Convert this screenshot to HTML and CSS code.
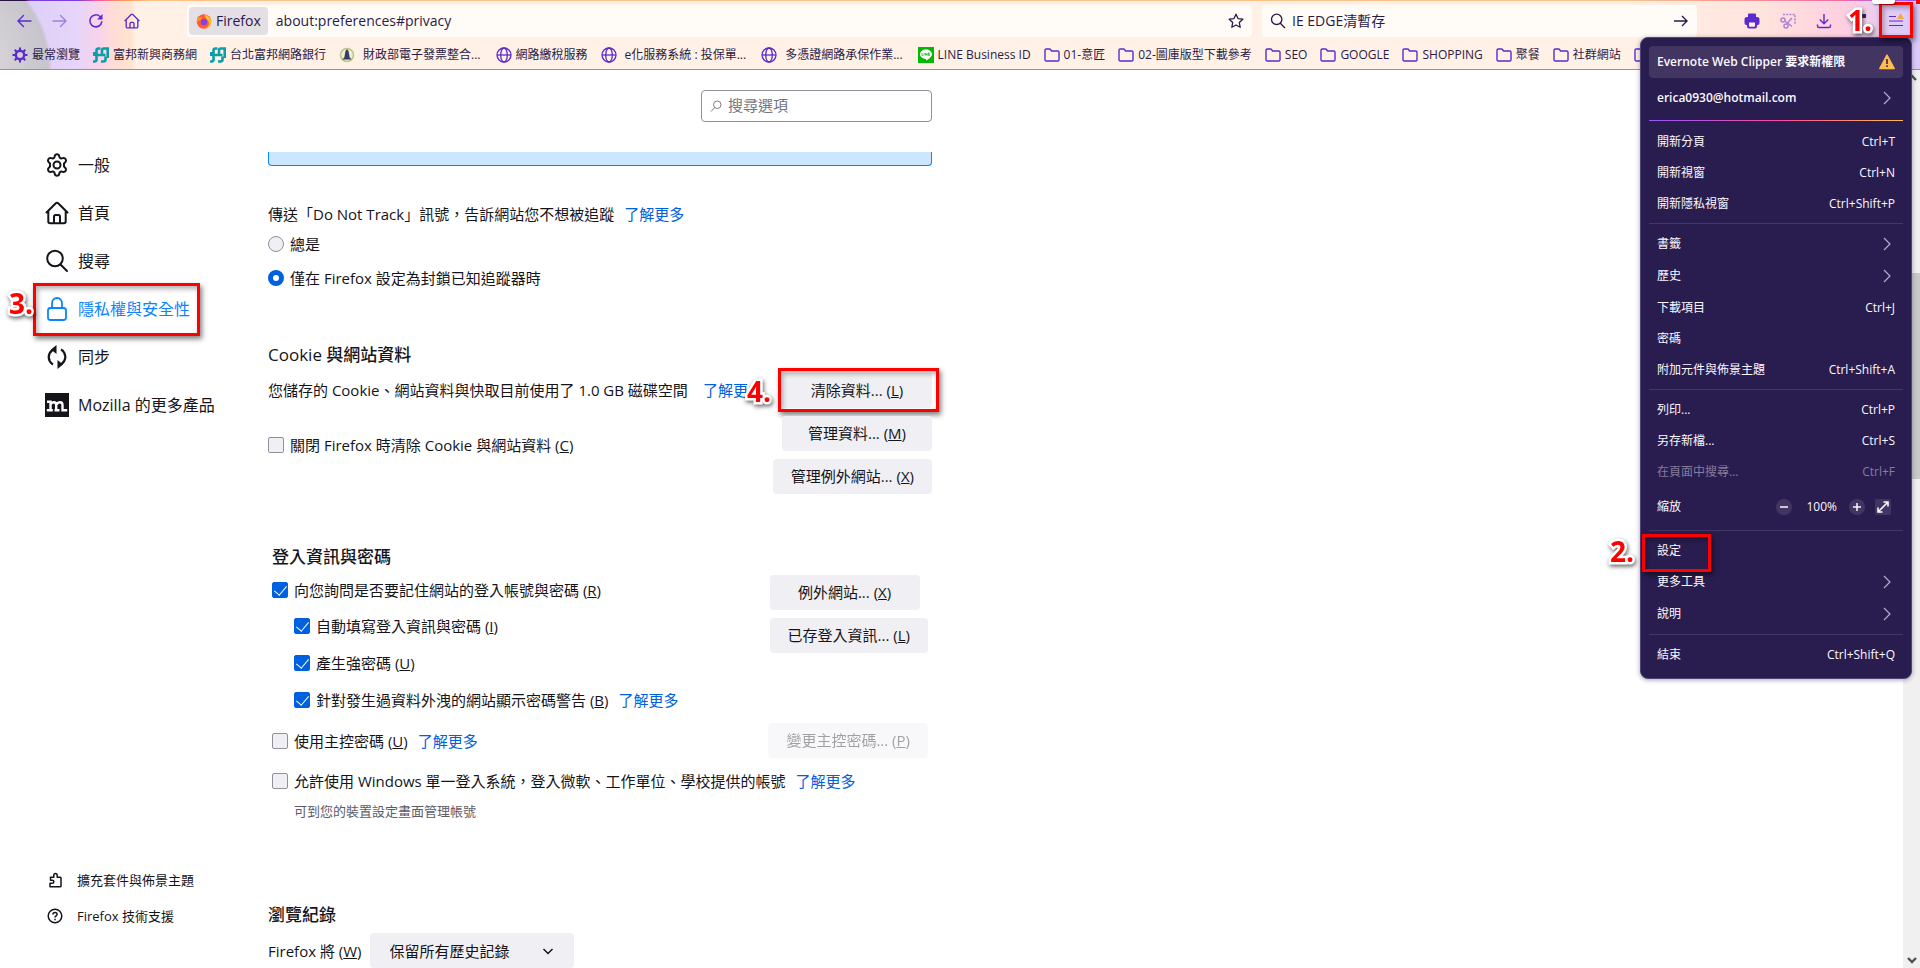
FILE: index.html
```html
<!DOCTYPE html>
<html lang="zh-Hant">
<head>
<meta charset="utf-8">
<title>設定</title>
<link rel="stylesheet" href="styles.css">
</head>
<body>
<svg class="defs" aria-hidden="true">
  <symbol id="folder" viewBox="0 0 16 16"><path d="M1 12.700V3.200C1 2.500 1.500 2 2.200 2h3.300c.4 0 .8.200 1 .500L7.600 4h6.200c.7 0 1.200.5 1.200 1.200v7.500c0 .7-.5 1.300-1.200 1.300H2.200C1.500 14 1 13.400 1 12.700z" fill="none" stroke="currentColor" stroke-width="1.400"/></symbol>
  <symbol id="globe" viewBox="0 0 16 16"><g fill="none" stroke="currentColor" stroke-width="1.300"><circle cx="8" cy="8" r="7"/><ellipse cx="8" cy="8" rx="3.300" ry="7"/><path d="M1 8h14"/></g></symbol>
  <symbol id="fubon" viewBox="0 0 16 16"><path d="M7.500 1.500H5.500Q3.500 1.500 3.500 3.500V12.500Q3.500 14.500 1.500 14.500H0M1.300 5v4M3.500 8H12.500M8 14.500H10.500Q12.500 14.500 12.500 12.500V9.500M9 7V3.500Q9 1.500 11 1.500H14.700V11" fill="none" stroke="#0a9ea8" stroke-width="2.600"/></symbol>
  <symbol id="chev" viewBox="0 0 16 16"><path d="M5 2l6 6-6 6" fill="none" stroke="currentColor" stroke-width="1.200"/></symbol>
  <symbol id="home" viewBox="0 0 24 24"><path d="M1.500 11.500L10.800 2.300a1.700 1.700 0 0 1 2.400 0l9.300 9.200M3.300 10v10.500c0 1 .8 1.800 1.800 1.800h13.800c1 0 1.800-.8 1.800-1.800V10M9 22v-6.300c0-1 .7-1.700 1.700-1.700h2.600c1 0 1.700.7 1.700 1.700V22" fill="none" stroke="currentColor" stroke-width="2" stroke-linecap="round"/></symbol>
  <symbol id="lens" viewBox="0 0 24 24"><path d="M15.500 15.500L22 22" stroke="currentColor" stroke-width="2" stroke-linecap="round"/><circle cx="10" cy="9.500" r="7.800" fill="none" stroke="currentColor" stroke-width="2"/></symbol>
</svg>

<header class="chrome">
  <div class="navbar">
    <div class="nav-buttons">
      <button aria-label="上一頁"><svg viewBox="0 0 16 16"><path d="M15 8H2M7.500 2.500L2 8l5.500 5.500" fill="none" stroke="currentColor" stroke-width="1.400" stroke-linecap="round"/></svg></button>
      <button aria-label="下一頁" class="faded"><svg viewBox="0 0 16 16"><path d="M1 8h13M8.500 2.500L14 8l-5.500 5.500" fill="none" stroke="currentColor" stroke-width="1.400" stroke-linecap="round"/></svg></button>
      <button aria-label="重新載入"><svg viewBox="0 0 16 16"><path d="M13.800 8.700A6 6 0 1 1 12 3.500" fill="none" stroke="currentColor" stroke-width="1.500" stroke-linecap="round"/><path d="M14.500 1v5.500H9z" fill="currentColor"/></svg></button>
      <button aria-label="首頁"><svg><use href="#home"/></svg></button>
    </div>
    <div class="urlbar">
      <span class="identity"><svg viewBox="0 0 16 16"><circle cx="8" cy="8.500" r="7.300" fill="#ff5a36"/><path d="M9 .5c1 1.500 2 2 3.500 3 2 1.500 3 4 2.500 6.500-.8 3.500-4 6-7.500 5.800 4-.8 6.500-4 5-7.300C11.500 6.500 8.500 5 9 .5z" fill="#ffc21f"/><path d="M1 4.500c1-.5 2-.3 2.500.2 1-.7 2-.7 3-.2L5 6.500 1 9z" fill="#ff9a1f"/><circle cx="8" cy="9" r="3.200" fill="#8a3fe0"/></svg>Firefox</span>
      <input class="url" aria-label="網址" value="about:preferences#privacy">
      <button class="plain" aria-label="加入書籤"><svg viewBox="0 0 16 16"><path d="M8 1.200l2 4.400 4.800.6-3.500 3.300.9 4.800L8 12l-4.200 2.300.9-4.800L1.200 6.200 6 5.600z" fill="none" stroke="currentColor" stroke-width="1.300" stroke-linejoin="round"/></svg></button>
    </div>
    <div class="searchbar">
      <svg><use href="#lens"/></svg>
      <input aria-label="搜尋" value="IE EDGE清暫存">
      <button class="plain" aria-label="前往"><svg viewBox="0 0 16 16"><path d="M1 8h13M9 3l5 5-5 5" fill="none" stroke="currentColor" stroke-width="1.400"/></svg></button>
    </div>
    <div class="tools">
      <button aria-label="列印"><svg viewBox="0 0 16 16"><path d="M4 1.500Q4 .5 5 .5h6q1 0 1 1V4H4zM3 4h10a2.500 2.500 0 0 1 2.500 2.500V10q0 2-2 2H13v1.500q0 2-2 2H5q-2 0-2-2V12h-.5q-2 0-2-2V6.500A2.500 2.500 0 0 1 3 4z" fill="currentColor"/><path d="M5 9.500h6V13q0 .8-.8.8H5.800Q5 13.800 5 13z" fill="#ffeede"/></svg></button>
      <button aria-label="擷取畫面" class="faded"><svg viewBox="0 0 16 16"><g fill="none" stroke="currentColor" stroke-width="1.500"><path d="M3 1.500h12v10" stroke-dasharray="2 1.200"/><circle cx="3" cy="7" r="2"/><circle cx="6" cy="13" r="2"/><path d="M4.800 8L12 13.500M6.500 11L12 5"/></g></svg></button>
      <button aria-label="下載"><svg viewBox="0 0 16 16"><path d="M8 1v9.500M3.800 6.500L8 10.700l4.200-4.200M1.500 11.500V13c0 .8.700 1.500 1.500 1.500h10c.8 0 1.500-.7 1.500-1.500v-1.500" fill="none" stroke="currentColor" stroke-width="1.400"/></svg></button>
      <button aria-label="擴充套件"><svg viewBox="0 0 16 16"><path d="M8 1h6v4H8z" fill="#3a2a55"/></svg><b class="step step-1">1.</b></button>
      <button aria-label="選單" class="burger"><svg viewBox="0 0 16 16"><path d="M1 3.500h7M1 8h14M1 12.500h14" stroke="currentColor" stroke-width="1.200"/><path d="M12.500 0l3.500 6H9z" fill="#ffa436"/></svg><i class="mark mark-burger"></i><i class="cut cut-white"></i><i class="cut cut-red"></i></button>
    </div>
  </div>
  <nav class="bookmarks" aria-label="書籤工具列">
    <a href="#"><svg viewBox="0 0 16 16"><circle cx="8" cy="8" r="4.200" fill="none" stroke="currentColor" stroke-width="2.400"/><path d="M8 .5v3M8 12.500v3M.5 8h3M12.500 8h3M2.700 2.700l2 2M11.300 11.300l2 2M2.700 13.300l2-2M11.300 4.700l2-2" stroke="currentColor" stroke-width="2"/></svg>最常瀏覽</a>
    <a href="#"><svg><use href="#fubon"/></svg>富邦新興商務網</a>
    <a href="#"><svg><use href="#fubon"/></svg>台北富邦網路銀行</a>
    <a href="#" class="wide"><svg viewBox="0 0 16 16"><circle cx="8" cy="8" r="6.500" fill="#f2efc4" stroke="#b9c48b" stroke-width="1.500"/><path d="M8 2l1.500 2 1.200 6.500 2 2H3.300l2-2L6.500 4z" fill="#343c6e"/></svg>財政部電子發票整合...</a>
    <a href="#"><svg><use href="#globe"/></svg>網路繳稅服務</a>
    <a href="#" class="wide"><svg><use href="#globe"/></svg>e化服務系統 : 投保單...</a>
    <a href="#" class="wide"><svg><use href="#globe"/></svg>多憑證網路承保作業...</a>
    <a href="#"><svg viewBox="0 0 16 16"><path d="M0 0h16v16H0z" fill="#00b900"/><path d="M8 2.500c3.300 0 6 2.100 6 4.800 0 2.500-3.500 4.900-6 6.500.2-1 .3-1.600-.3-1.700C4.500 11.800 2 9.800 2 7.300c0-2.700 2.700-4.800 6-4.800z" fill="#fff"/><path d="M4 6v2.500h1.300M6.200 6v2.500M7.500 8.500V6l1.700 2.500V6M12 6h-1.500v2.500H12M10.500 7.200H12" fill="none" stroke="#00b900" stroke-width=".7"/></svg>LINE Business ID</a>
    <a href="#"><svg><use href="#folder"/></svg>01-意匠</a>
    <a href="#"><svg><use href="#folder"/></svg>02-圖庫版型下載參考</a>
    <a href="#"><svg><use href="#folder"/></svg>SEO</a>
    <a href="#"><svg><use href="#folder"/></svg>GOOGLE</a>
    <a href="#"><svg><use href="#folder"/></svg>SHOPPING</a>
    <a href="#"><svg><use href="#folder"/></svg>聚餐</a>
    <a href="#"><svg><use href="#folder"/></svg>社群網站</a>
    <a href="#" aria-label="資料夾"><svg><use href="#folder"/></svg></a>
  </nav>
</header>

<div class="page">
  <nav class="sidebar" aria-label="設定分類">
    <a href="#"><svg viewBox="0 0 24 24"><g fill="none" stroke="currentColor" stroke-width="2" stroke-linejoin="round"><path d="M9.700 3.200c.3-1.300.9-2 2.300-2s2 .7 2.300 2l.4 1.500 1.500.9 1.500-.5c1.300-.4 2.300-.1 3 1.100.7 1.200.4 2.200-.5 3.100l-1.200 1.100v3.200l1.200 1.100c.9.900 1.200 1.900.5 3.100-.7 1.200-1.700 1.500-3 1.100l-1.500-.5-1.500.9-.4 1.500c-.3 1.300-.9 2-2.300 2s-2-.7-2.300-2l-.4-1.500-1.500-.9-1.500.5c-1.300.4-2.300.1-3-1.100-.7-1.200-.4-2.200.5-3.100L5 13.600v-3.200L3.800 9.300c-.9-.9-1.200-1.900-.5-3.100.7-1.200 1.700-1.500 3-1.100l1.500.5 1.500-.9z"/><circle cx="12" cy="12" r="3.500"/></g></svg>一般</a>
    <a href="#"><svg><use href="#home"/></svg>首頁</a>
    <a href="#"><svg><use href="#lens"/></svg>搜尋</a>
    <a href="#" class="current" aria-current="page"><svg viewBox="0 0 24 24"><g fill="none" stroke="currentColor" stroke-width="1.800"><rect x="3" y="11" width="18" height="12" rx="2.500"/><path d="M7 11V6.500C7 3.500 9 1 12 1s5 2.500 5 5.500V11"/></g></svg>隱私權與安全性<i class="mark mark-privacy"></i><b class="step step-3">3.</b></a>
    <a href="#"><svg viewBox="0 0 24 24"><path d="M10.500 4.200C5 5 2 11 4.800 16.300c.8 1.400 1.800 2.400 3.200 3.200M13.500 19.800c5.500-.8 8.500-6.800 5.700-12.100A8 8 0 0 0 16 4.500" fill="none" stroke="currentColor" stroke-width="2.200"/><path d="M11.500 0v9L6 4.500zM12.500 24v-9l5.500 4.500z" fill="currentColor"/></svg>同步</a>
    <a href="#"><svg viewBox="0 0 24 24"><path d="M0 0h24v24H0z" fill="#15141a"/><path d="M2 8.800h3.500v8M1.800 17.300h6M5.500 11.500c1.500-3 5.700-3 5.700.5v4.800M9.500 17.300h5M11.500 11.500c1.500-3 6-3 6 .5v5.300h4.700" fill="none" stroke="#fff" stroke-width="2.400"/></svg>Mozilla 的更多產品</a>
    <div class="side-footer">
      <a href="#"><svg viewBox="0 0 16 16"><path d="M3 14.800h10.200c.5 0 .8-.3.800-.8V6c0-.5-.3-.8-.8-.8h-3V3.500c0-1.200-.6-2-1.700-2s-1.700.8-1.700 2v1.700H3.500v3h1.700c1 0 1.700.6 1.700 1.500s-.7 1.600-1.700 1.600H3z" fill="none" stroke="currentColor" stroke-width="1.500" stroke-linejoin="round"/></svg>擴充套件與佈景主題</a>
      <a href="#"><svg viewBox="0 0 16 16"><g fill="none" stroke="currentColor" stroke-width="1.500"><circle cx="8" cy="8" r="6.800"/><path d="M5.900 6.500c0-1.300.9-2.100 2.100-2.100s2.100.8 2.100 1.900c0 1.500-2.100 1.500-2.100 3.200M8 10.800v1.500"/></g></svg>Firefox 技術支援</a>
    </div>
  </nav>

  <main class="content">
    <div class="search-row">
      <label class="find"><svg viewBox="0 0 24 24"><path d="M9 15.500L2 23" stroke="currentColor" stroke-width="2"/><circle cx="14.500" cy="9.500" r="7.500" fill="none" stroke="currentColor" stroke-width="2"/></svg><input type="search" placeholder="搜尋選項" aria-label="搜尋選項"></label>
    </div>
    <div class="banner"></div>

    <section class="dnt">
      <p>傳送「Do Not Track」訊號，告訴網站您不想被追蹤<a href="#">了解更多</a></p>
      <label class="row"><input type="radio" name="dnt">總是</label>
      <label class="row"><input type="radio" name="dnt" checked>僅在 Firefox 設定為封鎖已知追蹤器時</label>
    </section>

    <section class="cookies">
      <h2>Cookie 與網站資料</h2>
      <div class="split">
        <div>
          <p class="usage">您儲存的 Cookie、網站資料與快取目前使用了 1.0 GB 磁碟空間<a href="#">了解更多</a></p>
          <label class="row"><input type="checkbox">關閉 Firefox 時清除 Cookie 與網站資料 (<u>C</u>)</label>
        </div>
        <div class="actions end">
          <button class="btn">清除資料... (<u>L</u>)<i class="mark mark-clear"></i><b class="step step-4">4.</b></button>
          <button class="btn">管理資料... (<u>M</u>)</button>
          <button class="btn">管理例外網站... (<u>X</u>)</button>
        </div>
      </div>
    </section>

    <section class="logins">
      <h2>登入資訊與密碼</h2>
      <div class="split">
        <div>
          <label class="row first"><input type="checkbox" checked>向您詢問是否要記住網站的登入帳號與密碼 (<u>R</u>)</label>
          <div class="nested">
            <label class="row"><input type="checkbox" checked>自動填寫登入資訊與密碼 (<u>I</u>)</label>
            <label class="row"><input type="checkbox" checked>產生強密碼 (<u>U</u>)</label>
            <div class="row"><label><input type="checkbox" checked>針對發生過資料外洩的網站顯示密碼警告 (<u>B</u>)</label><a href="#">了解更多</a></div>
          </div>
        </div>
        <div class="actions">
          <button class="btn">例外網站... (<u>X</u>)</button>
          <button class="btn">已存登入資訊... (<u>L</u>)</button>
        </div>
      </div>
      <div class="split master">
        <div class="row"><label><input type="checkbox">使用主控密碼 (<u>U</u>)</label><a href="#">了解更多</a></div>
        <button class="btn" disabled>變更主控密碼... (<u>P</u>)</button>
      </div>
      <div class="row sso"><label><input type="checkbox">允許使用 Windows 單一登入系統，登入微軟、工作單位、學校提供的帳號</label><a href="#">了解更多</a></div>
      <p class="hint">可到您的裝置設定畫面管理帳號</p>
    </section>

    <section class="history">
      <h2>瀏覽紀錄</h2>
      <div class="history-row">
        <label for="mode">Firefox 將 (<u>W</u>)</label>
        <span class="select"><select id="mode"><option>保留所有歷史記錄</option></select><svg viewBox="0 0 16 16"><path d="M3.500 6L8 10.500 12.500 6" fill="none" stroke="currentColor" stroke-width="1.500"/></svg></span>
      </div>
    </section>
  </main>

  <div class="scrollbar" aria-hidden="true">
    <svg viewBox="0 0 16 16"><path d="M4 10l4-4 4 4" fill="none" stroke="#505050" stroke-width="2.400"/></svg>
    <div class="track"><div class="thumb"></div></div>
    <svg viewBox="0 0 16 16"><path d="M4 6l4 4 4-4" fill="none" stroke="#505050" stroke-width="2.400"/></svg>
  </div>
</div>

<aside class="menu" aria-label="應用程式選單">
  <button class="notice">Evernote Web Clipper 要求新權限<svg viewBox="0 0 16 16"><path d="M8 1.200L15.200 14.500H.8z" fill="#ffbd4f" stroke="#ffbd4f" stroke-width="1.500" stroke-linejoin="round"/><path d="M8 5v5M8 11.300v1.600" stroke="#291d4f" stroke-width="1.500"/></svg></button>
  <button class="account">erica0930@hotmail.com<svg><use href="#chev"/></svg></button>
  <hr class="rainbow">
  <button>開新分頁<kbd>Ctrl+T</kbd></button>
  <button>開新視窗<kbd>Ctrl+N</kbd></button>
  <button>開新隱私視窗<kbd>Ctrl+Shift+P</kbd></button>
  <hr>
  <button class="sub">書籤<svg><use href="#chev"/></svg></button>
  <button class="sub">歷史<svg><use href="#chev"/></svg></button>
  <button>下載項目<kbd>Ctrl+J</kbd></button>
  <button>密碼</button>
  <button>附加元件與佈景主題<kbd>Ctrl+Shift+A</kbd></button>
  <hr>
  <button>列印...<kbd>Ctrl+P</kbd></button>
  <button>另存新檔...<kbd>Ctrl+S</kbd></button>
  <button disabled>在頁面中搜尋...<kbd>Ctrl+F</kbd></button>
  <div class="zoom">縮放
    <span class="zoom-controls">
      <button aria-label="縮小" class="round"><svg viewBox="0 0 16 16"><path d="M4 8h8" stroke="currentColor" stroke-width="1.500"/></svg></button>
      <span>100%</span>
      <button aria-label="放大" class="round"><svg viewBox="0 0 16 16"><path d="M4 8h8M8 4v8" stroke="currentColor" stroke-width="1.500"/></svg></button>
      <button aria-label="全螢幕"><svg viewBox="0 0 16 16"><path d="M4 12l8-8M8.500 3H13v4.500M3 8.500V13h4.500" fill="none" stroke="currentColor" stroke-width="1.600"/></svg></button>
    </span>
  </div>
  <hr>
  <button class="settings">設定<i class="mark mark-settings"></i><b class="step step-2">2.</b></button>
  <button class="sub">更多工具<svg><use href="#chev"/></svg></button>
  <button class="sub">說明<svg><use href="#chev"/></svg></button>
  <hr>
  <button>結束<kbd>Ctrl+Shift+Q</kbd></button>
</aside>
</body>
</html>
```
FILE: styles.css
```css
* { box-sizing: border-box; }
body {
  margin: 0;
  height: 100vh;
  display: flex;
  flex-direction: column;
  overflow: hidden;
  position: relative;
  background: #fff;
  color: #15141a;
  font: 15px/24px "Open Sans", "Noto Sans CJK TC", sans-serif;
}
button, input, select, kbd { font: inherit; color: inherit; }
button { border: 0; padding: 0; background: none; position: relative; }
a { color: #0061e0; text-decoration: none; }
p, h2 { margin: 0; }
svg { width: 16px; height: 16px; flex: none; display: block; }
.defs { position: absolute; width: 0; height: 0; }

/* Browser toolbar */
.chrome {
  height: 70px;
  flex: none;
  color: #5a2bd0;
  padding-top: 1px;
  border-bottom: 1px solid #b58a7c;
  background:
    linear-gradient(90deg, #2a1045 0 25px, #7a3fe0 30px 80px, #f05a9c 95px, #ff9a5a 125px, #ffc08a 150px, #ffc08a 85%, #f06aa0 96%, #9059ff) top / 100% 1px no-repeat,
    radial-gradient(circle at -60px 69px, #d6d2d6 0 60px, #c6c4cd 108px, transparent 112px),
    linear-gradient(90deg, #d9ccf6 0, #e6d5fa 75px, #f8d3ea 100px, #ffdcd8 112px, #ffe4cf 131px, #fff1e5 136px, #fff1e5 85%, #ffe3dd 92%, #ffcfe0 96%, #dccbfa 99%);
}
.navbar { height: 40px; display: flex; align-items: center; padding: 0 16px; }
.nav-buttons { display: flex; gap: 20px; width: 171px; }
.faded { opacity: .5; }
.urlbar, .searchbar {
  height: 32px;
  border-radius: 4px;
  background: #fffcf8;
  color: #2a1a48;
  display: flex;
  align-items: center;
  font-size: 14px;
}
.urlbar { flex: 1; padding: 0 8px 0 2px; }
.identity {
  height: 28px;
  padding: 0 7px;
  border-radius: 4px;
  background: #e4dfe4;
  display: flex;
  align-items: center;
  gap: 4px;
}
.urlbar input, .searchbar input { flex: 1; min-width: 0; border: 0; background: none; outline: 0; padding: 0 8px; }
.searchbar { width: 435px; margin-left: 10px; padding: 0 8px; }
.searchbar input { padding: 0 6px; }
.tools { display: flex; gap: 20px; margin-left: 47px; }
.tools button:last-child { z-index: 2; }

.bookmarks {
  height: 28px;
  display: flex;
  align-items: center;
  gap: 13px;
  padding-left: 12px;
  font-size: 12px;
  white-space: nowrap;
  overflow: hidden;
}
.bookmarks a { display: flex; align-items: center; gap: 4px; color: #2a1a48; }
.bookmarks .wide { gap: 8px; padding-right: 2px; }
.bookmarks svg { color: #5a2bd0; }

/* Preferences page */
.page { flex: 1; display: flex; min-height: 0; }
.sidebar { width: 268px; padding: 71px 0 34px 45px; display: flex; flex-direction: column; font-size: 16px; }
.sidebar a { height: 48px; display: flex; align-items: center; gap: 9px; color: #15141a; position: relative; }
.sidebar svg { width: 24px; height: 24px; }
.sidebar .current { color: #0a84ff; }
.side-footer { margin-top: auto; font-size: 13px; padding-left: 2px; }
.side-footer a { height: 36px; gap: 14px; }
.side-footer svg { width: 16px; height: 16px; }

.content { width: 664px; }
.search-row { height: 82px; padding-top: 20px; display: flex; justify-content: flex-end; }
.find {
  width: 231px;
  height: 32px;
  border: 1px solid #8f8f9d;
  border-radius: 4px;
  display: flex;
  align-items: center;
  gap: 6px;
  padding: 0 8px;
  color: #7c7c86;
}
.find svg { width: 12px; height: 12px; }
.find input { border: 0; outline: 0; padding: 0 0 2px; width: 100%; min-width: 0; }
.find input::placeholder { color: #75757f; }
.banner { height: 14px; border: 1px solid #0a84ff; border-top: 0; border-radius: 0 0 4px 4px; background: #cde6ff; }

.row { display: flex; align-items: center; height: 37px; white-space: nowrap; }
.row label { display: flex; align-items: center; white-space: pre; }
label.row { white-space: pre; }
.row a, .dnt p a { margin-left: 10px; }
input[type="checkbox"], input[type="radio"] {
  appearance: none;
  width: 16px;
  height: 16px;
  margin: 0 6px 0 0;
  border: 1px solid #8f8f9d;
  border-radius: 2px;
  background: #f0f0f4;
  flex: none;
  display: grid;
  place-items: center;
}
input[type="radio"] { border-radius: 50%; }
input[type="radio"]:checked { border: 5px solid #0061e0; background: #fff; }
input[type="checkbox"]:checked { border-color: #0061e0; background: #0061e0; }
input[type="checkbox"]:checked::before {
  content: "";
  width: 6px;
  height: 11px;
  margin-bottom: 3px;
  border: solid #fff;
  border-width: 0 1px 1px 0;
  transform: rotate(40deg);
}

h2 { font-size: 17px; line-height: 26px; font-weight: 500; }
.split { display: flex; justify-content: space-between; }
.actions { display: flex; flex-direction: column; align-items: flex-start; gap: 8px; }
.actions.end { align-items: flex-end; }
.btn { height: 35px; min-width: 150px; padding: 0 18px 2px; border-radius: 4px; background: #f0f0f4; white-space: nowrap; }
.btn:disabled { opacity: .4; }

.dnt { margin-top: 36px; }
.dnt p { margin-bottom: 1px; }
.dnt .row { height: 34px; }
.cookies { margin-top: 47px; }
.cookies .split { margin-top: 5px; }
.usage { height: 34px; line-height: 34px; white-space: nowrap; }
.usage a { margin-left: 15px; }
.cookies .row { margin-top: 19px; }
.cookies .split > :first-child { width: 505px; }
.logins { margin: 50px 4px 0; }
.logins .split { margin-top: 2px; }
.logins .actions { padding-top: 3px; }
.logins .first { height: 35px; }
.nested { padding-left: 22px; }
.logins .master { align-items: center; margin-top: 4px; }
.sso { margin-top: 3px; }
.hint { margin-left: 22px; font-size: 13px; color: #5b5b66; }
.history { margin-top: 79px; }
.history-row { display: flex; align-items: center; gap: 8px; margin-top: 5px; }
.select { width: 204px; display: grid; align-items: center; }
.select > * { grid-area: 1 / 1; }
.select select { appearance: none; height: 35px; border: 0; border-radius: 4px; background: #f0f0f4; padding: 0 20px; }
.select svg { justify-self: end; margin-right: 18px; pointer-events: none; }

.scrollbar { width: 17px; margin-left: auto; background: #f0f0f0; display: flex; flex-direction: column; align-items: center; }
.track { flex: 1; width: 100%; padding-top: 187px; }
.thumb { height: 206px; background: #c9c9c9; }

/* Application menu */
.menu {
  position: absolute;
  top: 37px;
  right: 8px;
  width: 272px;
  padding: 8px;
  border: 1px solid #4f4378;
  border-radius: 8px;
  background: #291d4f;
  color: #fbf8ff;
  font-size: 12px;
  box-shadow: 0 1px 5px rgba(40, 20, 70, .4);
}
.menu > button { width: 100%; height: 31px; padding: 0 8px; display: flex; align-items: center; justify-content: space-between; border-radius: 4px; text-align: left; }
.menu > button:disabled { color: #857c9e; }
.menu > .sub { height: 32px; }
.menu > .notice { height: 32px; background: #423562; font-weight: 600; }
.menu > .account { height: 40px; font-weight: 600; }
.menu .sub svg, .menu .account svg { color: #b5aecb; }
.menu hr { border: 0; height: 1px; margin: 4px 0; background: #443865; }
.menu .rainbow { margin: 2px 0 5px; background: linear-gradient(90deg, #9059ff, #ff4aa2 52%, #ffbd4f); }
.zoom { height: 39px; padding: 0 12px 0 8px; display: flex; align-items: center; justify-content: space-between; }
.zoom-controls { display: flex; align-items: center; }
.zoom-controls span { margin: 0 12px 0 14px; }
.zoom-controls button { background: #423562; border-radius: 2px; }
.zoom-controls .round { border-radius: 50%; }
.zoom-controls .round:nth-of-type(2) { margin-right: 10px; }

/* Tutorial marks */
.mark { position: absolute; border: 3px solid #f00; box-shadow: 2px 3px 5px rgba(0, 0, 0, .5), inset 2px 3px 5px rgba(0, 0, 0, .3); pointer-events: none; }
.mark-burger { inset: -11px -9px -9px; }
.mark-privacy { left: -12px; top: -2px; width: 167px; height: 53px; }
.mark-clear { inset: -5px -7px -4px -4px; }
.mark-settings { left: -7px; top: -1px; width: 69px; height: 38px; }
.step {
  position: absolute;
  color: #f00;
  font: 700 28px/28px "Open Sans", sans-serif;
  -webkit-text-stroke: 5px #fff;
  paint-order: stroke fill;
  filter: drop-shadow(1px 2px 2px rgba(0, 0, 0, .6));
}
.step-1 { left: -4px; top: -7px; }
.step-2 { left: -39px; top: 2px; }
.step-3 { left: -36px; top: 4px; }
.step-4 { left: -35px; top: 4px; }
.cut { position: absolute; top: -13px; height: 4px; }
.cut-white { left: -16px; width: 23px; background: #fff; border-radius: 0 0 3px 3px; box-shadow: 1px 1px 2px rgba(0, 0, 0, .5); }
.cut-red { left: 28px; width: 4px; background: #f00; }
```
